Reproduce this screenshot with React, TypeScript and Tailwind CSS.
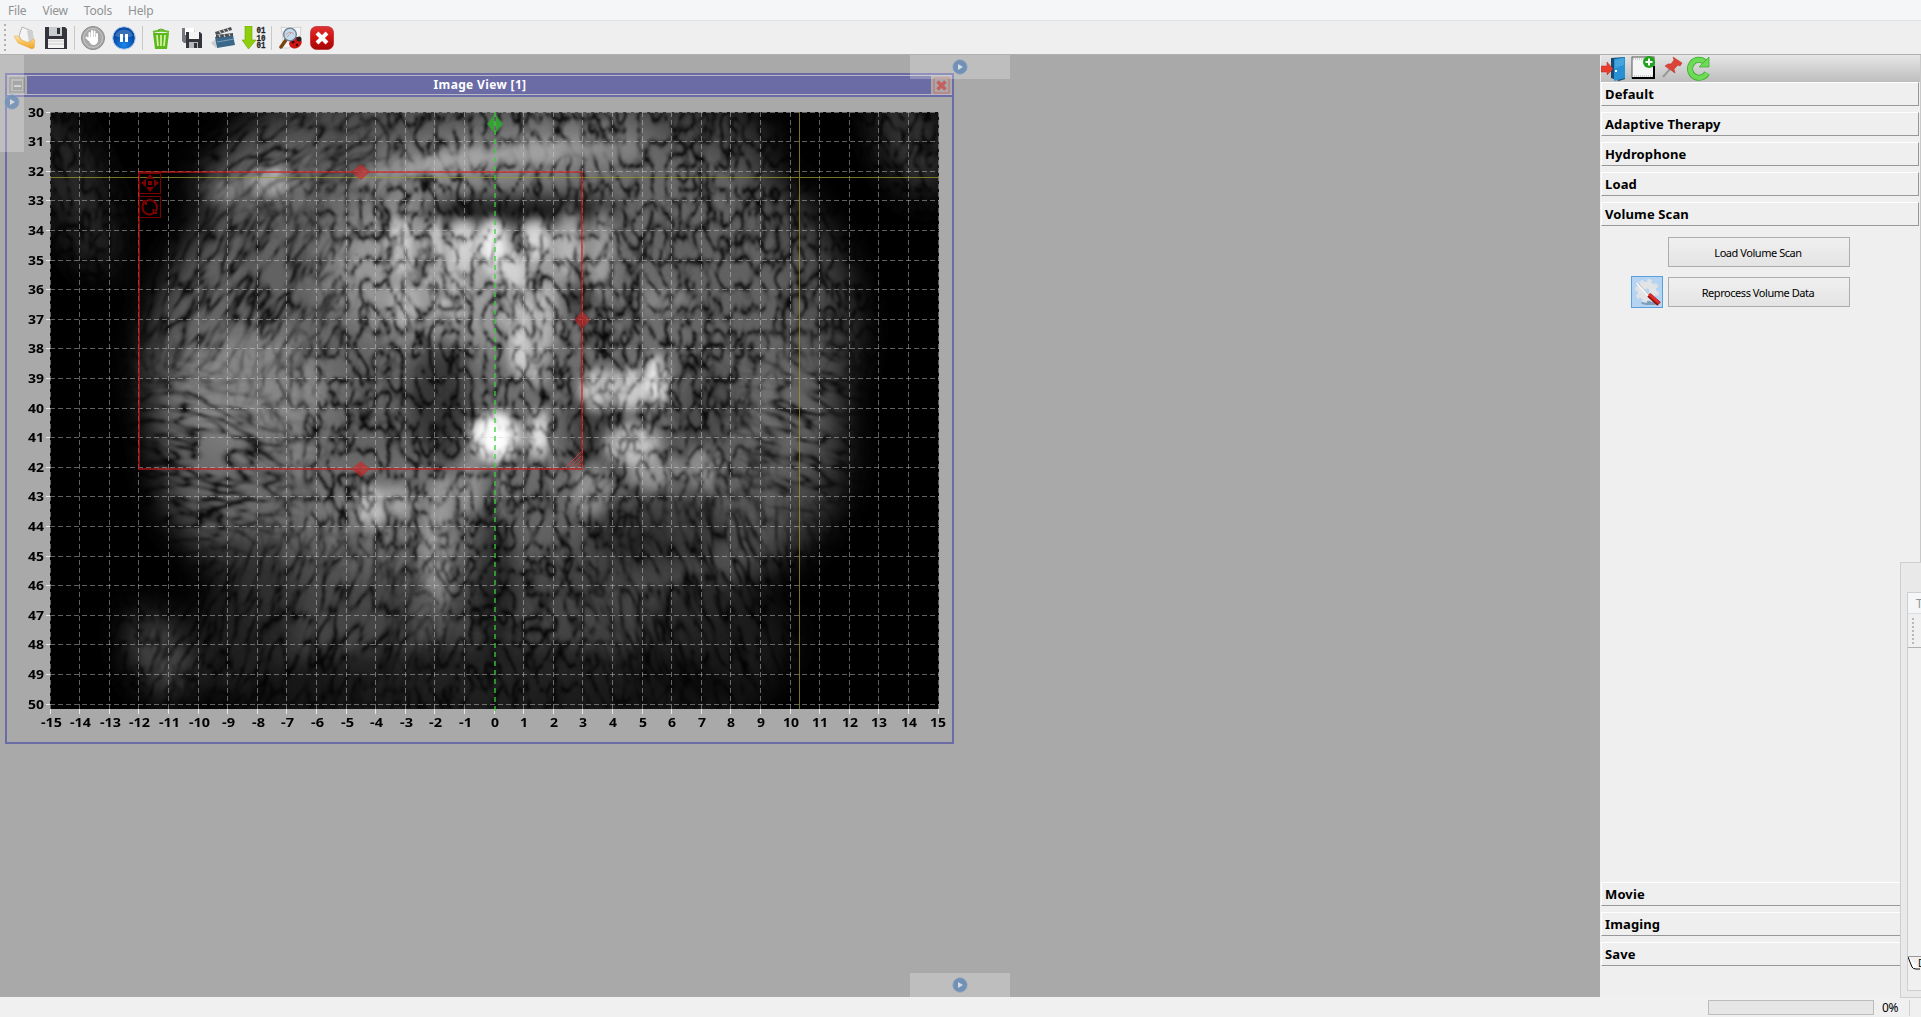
import React from 'react';

const UI = "font-['Noto_Sans',sans-serif]";
const STEP = 29.6;
const xAt = (u: number) => Math.floor(494 + u * STEP) + 0.5;
const yAt = (v: number) => Math.floor(112 + (v - 30) * STEP) + 0.5;
const COLS = Array.from({ length: 31 }, (_, i) => i - 15);
const ROWS = Array.from({ length: 21 }, (_, i) => i + 30);

// Echo patches: centre x, centre y, radius x, radius y, grey level, opacity, rotation
type Patch = [number, number, number, number, number, number, number];
const BROAD: Patch[] = [
  [485, 390, 335, 315, 85, 0.75, 0],
  [500, 150, 270, 90, 90, 0.65, 0],
  [490, 640, 300, 110, 75, 0.6, 0],
  [420, 370, 275, 210, 120, 0.62, 0],
  [650, 330, 205, 190, 118, 0.6, 0],
  [740, 450, 105, 120, 105, 0.6, 0],
  [255, 395, 75, 65, 150, 0.7, 0],
  [250, 480, 90, 70, 115, 0.5, 0],
  [460, 270, 135, 75, 175, 0.7, 0],
  [500, 155, 150, 22, 165, 0.75, -7],
  [410, 510, 110, 45, 135, 0.55, 0],
  [255, 175, 60, 26, 150, 0.6, -12],
  [160, 655, 24, 45, 100, 0.9, -25],
  [910, 140, 30, 60, 70, 0.8, -20],
  [75, 190, 30, 90, 55, 0.75, -20],
];
const SHADE: Patch[] = [
  [520, 210, 100, 15, 0, 0.8, 0],
  [440, 400, 30, 60, 10, 0.45, 0],
  [495, 575, 20, 80, 10, 0.5, 0],
  [590, 425, 22, 45, 20, 0.5, 0],
  [660, 530, 75, 35, 10, 0.3, 0],
  [490, 690, 250, 45, 0, 0.5, 0],
  [725, 640, 85, 60, 0, 0.4, 0],
  [240, 610, 60, 70, 0, 0.3, 0],
  [705, 410, 28, 50, 20, 0.35, 10],
  [580, 298, 16, 16, 0, 0.6, 0],
];
const GLOW: Patch[] = [
  [400, 245, 10, 28, 235, 0.75, 0],
  [435, 240, 9, 24, 225, 0.6, 0],
  [463, 245, 13, 26, 235, 0.65, 0],
  [493, 245, 12, 26, 255, 0.9, 0],
  [535, 240, 14, 20, 235, 0.75, 0],
  [508, 272, 18, 20, 225, 0.75, 0],
  [570, 240, 12, 35, 210, 0.5, 0],
  [450, 275, 28, 18, 200, 0.55, 0],
  [602, 250, 10, 45, 195, 0.45, 0],
  [405, 305, 14, 22, 200, 0.5, 0],
  [450, 308, 16, 14, 205, 0.5, 0],
  [520, 312, 18, 15, 205, 0.6, 0],
  [545, 320, 9, 35, 210, 0.55, 0],
  [520, 350, 10, 28, 235, 0.75, 0],
  [537, 362, 9, 24, 220, 0.6, 0],
  [598, 390, 18, 20, 225, 0.85, 0],
  [630, 388, 18, 20, 220, 0.85, 0],
  [657, 382, 10, 26, 250, 1, 0],
  [495, 437, 25, 24, 255, 1, 0],
  [495, 433, 14, 18, 255, 1, 0],
  [539, 435, 8, 24, 250, 1, 0],
  [632, 445, 26, 20, 215, 0.8, 0],
  [655, 472, 25, 16, 175, 0.6, 0],
  [703, 467, 18, 20, 165, 0.6, 0],
  [590, 490, 18, 26, 165, 0.55, 0],
  [370, 507, 13, 20, 220, 0.8, 0],
  [395, 502, 22, 14, 185, 0.65, 0],
  [440, 510, 12, 35, 170, 0.6, 8],
  [437, 565, 15, 45, 170, 0.6, -6],
  [470, 485, 10, 30, 165, 0.55, 0],
  [505, 490, 10, 28, 155, 0.45, 0],
  [270, 180, 20, 15, 200, 0.65, 0],
  [225, 190, 20, 12, 150, 0.5, 0],
  [430, 615, 18, 26, 115, 0.4, 0],
  [300, 458, 14, 20, 150, 0.4, 0],
  [260, 390, 60, 48, 140, 0.55, 0],
  [220, 370, 35, 30, 140, 0.4, 0],
  [665, 300, 26, 14, 150, 0.5, 0],
  [765, 405, 10, 35, 130, 0.4, 0],
];
// Smooth echo of the inserted needle
const NEEDLE: Patch[] = [
  [400, 171, 45, 10, 150, 0.75, -8],
  [460, 160, 55, 10, 170, 0.8, -7],
  [540, 152, 65, 10, 165, 0.85, -4],
  [600, 150, 45, 10, 135, 0.6, -3],
];

function Patches({ list, soft }: { list: Patch[]; soft: string }) {
  return (
    <g filter={`url(#${soft})`}>
      {list.map(([x, y, rx, ry, g, o, r], i) => (
        <ellipse key={i} cx={x} cy={y} rx={rx} ry={ry} fill={`rgb(${g},${g},${g})`} opacity={o} transform={`rotate(${r} ${x} ${y})`} />
      ))}
    </g>
  );
}

function Speckle({ id, fx, fy, seed }: { id: string; fx: number; fy: number; seed: number }) {
  const curve = '0.05 0.48 0.7 0.85 0.94 1';
  return (
    <filter id={id} x="0" y="0" width="1" height="1" colorInterpolationFilters="sRGB">
      <feTurbulence type="turbulence" baseFrequency={`${fx} ${fy}`} numOctaves={2} seed={seed} result="n" />
      <feColorMatrix values="2.8 0 0 0 -0.07  2.8 0 0 0 -0.07  2.8 0 0 0 -0.07  0 0 0 0 1" />
      <feComponentTransfer>
        <feFuncR type="table" tableValues={curve} />
        <feFuncG type="table" tableValues={curve} />
        <feFuncB type="table" tableValues={curve} />
      </feComponentTransfer>
      <feGaussianBlur stdDeviation="0.9" />
    </filter>
  );
}

// Areas whose speckle runs along a different direction: centre, radii, rotation of the grain
const GRAINS = [
  { id: 'ga', x: 190, y: 465, rx: 100, ry: 95, rot: 12, f: 'spH' },
  { id: 'gb', x: 225, y: 285, rx: 110, ry: 85, rot: 30, f: 'spV' },
  { id: 'gc', x: 240, y: 145, rx: 150, ry: 45, rot: 55, f: 'spV' },
  { id: 'gd', x: 810, y: 430, rx: 60, ry: 90, rot: 20, f: 'spH' },
  { id: 'ge', x: 290, y: 630, rx: 140, ry: 90, rot: 20, f: 'spV' },
  { id: 'gf', x: 720, y: 610, rx: 120, ry: 110, rot: -16, f: 'spV' },
];

function Ultrasound() {
  return (
    <svg className="block shrink-0" width="944" height="644" viewBox="7 97 944 644">
      <defs>
        <clipPath id="plot"><rect x="50" y="112" width="889" height="597" /></clipPath>
        <filter id="s26" x="-20%" y="-20%" width="140%" height="140%"><feGaussianBlur stdDeviation="17" /></filter>
        <filter id="s12" x="-20%" y="-20%" width="140%" height="140%"><feGaussianBlur stdDeviation="9" /></filter>
        <filter id="s5" x="-20%" y="-20%" width="140%" height="140%"><feGaussianBlur stdDeviation="5.500" /></filter>
        <filter id="s3" x="-20%" y="-60%" width="140%" height="220%"><feGaussianBlur stdDeviation="4" /></filter>
        <filter id="s18" x="-30%" y="-30%" width="160%" height="160%"><feGaussianBlur stdDeviation="20" /></filter>
        <Speckle id="sp" fx={0.072} fy={0.042} seed={7} />
        <Speckle id="spV" fx={0.075} fy={0.026} seed={21} />
        <Speckle id="spH" fx={0.026} fy={0.07} seed={12} />
        <mask id="mmain" maskUnits="userSpaceOnUse" x="0" y="90" width="960" height="660">
          <rect x="0" y="90" width="960" height="660" fill="#fff" />
          <g filter="url(#s18)">
            {GRAINS.map(g => <ellipse key={g.id} cx={g.x} cy={g.y} rx={g.rx} ry={g.ry} fill="#000" />)}
          </g>
        </mask>
        {GRAINS.map(g => (
          <mask key={g.id} id={g.id} maskUnits="userSpaceOnUse" x="0" y="90" width="960" height="660">
            <ellipse cx={g.x} cy={g.y} rx={g.rx} ry={g.ry} fill="#fff" filter="url(#s18)" />
          </mask>
        ))}
      </defs>
      <g clipPath="url(#plot)" style={{ isolation: 'isolate' }}>
        <rect x="50" y="112" width="889" height="597" fill="#000" />
        <Patches list={BROAD} soft="s26" />
        <Patches list={SHADE} soft="s12" />
        <g opacity="0.85"><Patches list={GLOW} soft="s5" /></g>
        <g mask="url(#mmain)" className="mix-blend-multiply">
          <rect x="50" y="112" width="889" height="597" filter="url(#sp)" />
        </g>
        {GRAINS.map(g => (
          <g key={g.id} mask={`url(#${g.id})`} className="mix-blend-multiply">
            <g transform={`rotate(${g.rot} ${g.x} ${g.y})`}>
              <rect x={g.x - 230} y={g.y - 230} width="460" height="460" filter={`url(#${g.f})`} />
            </g>
          </g>
        ))}
        <g opacity="0.5"><Patches list={GLOW} soft="s5" /></g>
        <Patches list={NEEDLE} soft="s3" />
        <ellipse cx="496" cy="437" rx="15" ry="18" fill="#fff" opacity=".8" filter="url(#s5)" />
      </g>
      <g stroke="#d2d2d2" strokeOpacity=".46" strokeDasharray="5 3" shapeRendering="crispEdges">
        {COLS.map(c => c !== 0 && <line key={c} x1={xAt(c)} x2={xAt(c)} y1="112" y2="709" />)}
        {ROWS.map(r => <line key={r} y1={yAt(r)} y2={yAt(r)} x1="50" x2="939" />)}
      </g>
      <g stroke="#e8e8e8" shapeRendering="crispEdges">
        {COLS.map(c => <line key={c} x1={xAt(c)} x2={xAt(c)} y1="709" y2="714" />)}
        {ROWS.map(r => <line key={r} y1={yAt(r)} y2={yAt(r)} x1="46" x2="50" />)}
      </g>
      <g shapeRendering="crispEdges" fill="none">
        <path d="M50 177.5H939M799.5 112V709" stroke="#99992b" strokeOpacity=".75" />
        <path d="M495 112V714" stroke="#37d337" strokeOpacity=".65" strokeWidth="2" strokeDasharray="5 4" />
        <path d="M139 172H582V469H139Z" stroke="#d01818" strokeOpacity=".6" strokeWidth="2" />
      </g>
      <g fill="#c82828" fillOpacity=".68">
        <path d="M352.500 171L361 164L369 171ZM352.500 173L361 180L369 173Z" />
        <path d="M352.500 468L361 461L369 468ZM352.500 470L361 477L369 470Z" />
        <path d="M581 312L574.500 320L581 328ZM583 312L590 320L583 328Z" />
      </g>
      <path d="M494 115L487 124L494 132ZM496 115L503 124L496 132Z" fill="#28b428" fillOpacity=".75" />
      <path d="M566 467L581 452M570 467L581 456M574 467L581 460M578 467L581 464" stroke="#cf3a3a" fill="none" />
      <g stroke="#7c0000" fill="none" shapeRendering="crispEdges">
        <rect x="139.500" y="173.500" width="21" height="20" />
        <rect x="139.500" y="196.500" width="21" height="21" />
      </g>
      <g fill="#7c0000">
        <path d="M150 174L154 179H146ZM150 192L146 187H154ZM141 183L146 179V187ZM159 183L154 187V179Z" />
        <rect x="148" y="181" width="4" height="4" />
      </g>
      <g fill="none" stroke="#7c0000" strokeWidth="2">
        <path d="M146 213.500A7.500 7.500 0 0 1 144.500 202M147.500 200.300A7.300 7.300 0 0 1 155.500 211.500M146 213.500Q150 215.500 153 213.500" />
        <path d="M142.500 201H146V205M157 213H153.500V209" />
      </g>
      <g fontFamily="'Noto Sans',sans-serif" fontWeight="700" fontSize="12.500" fill="#000">
        {ROWS.map(r => <text key={r} x="44" y={yAt(r) + 4.5} textAnchor="end" textLength="16" lengthAdjust="spacingAndGlyphs">{r}</text>)}
        {COLS.map(c => <text key={c} x={xAt(c) + (c === 15 ? -0.5 : c < 0 ? 1 : 0.5)} y="727" textAnchor="middle" textLength={(Math.abs(c) > 9 ? 16 : 8) + (c < 0 ? 5 : 0)} lengthAdjust="spacingAndGlyphs">{c}</text>)}
      </g>
    </svg>
  );
}

const Svg = ({ w = 24, h = 24, children, className = '' }: { w?: number; h?: number; children: React.ReactNode; className?: string }) => (
  <svg className={`block shrink-0 ${className}`} width={w} height={h} viewBox={`0 0 ${w} ${h}`}>{children}</svg>
);

const Sep = ({ className = '' }: { className?: string }) => <div className={`h-6 w-px shrink-0 bg-[#c8c8c8] ${className}`} />;

function Toolbar() {
  return (
    <div className="flex h-[34px] shrink-0 items-center border-b border-[#b0b0b0] bg-[#efefef]">
      <Svg w={3} h={27} className="ml-1">
        {[0, 1, 2, 3, 4, 5].map(i => <rect key={i} x="0" y={i * 5} width="2" height="2" fill="#b0b0b0" />)}
      </Svg>
      <Svg className="ml-[6px]">
        <defs><linearGradient id="fo" x2="0" y2="1"><stop stopColor="#ffe39a" /><stop offset="1" stopColor="#f0a020" /></linearGradient></defs>
        <path d="M6 10L9 1L19 5L21 21L10 17Z" fill="#f4f4f4" stroke="#b0b0b0" strokeWidth=".9" />
        <path d="M14 4L20 6L21 21L16 17Z" fill="#cfcfcf" />
        <path d="M1 10L5 10L7 13L14 16L17 16L20 13L22 14L21 22L19 23L5 17Z" fill="url(#fo)" stroke="#e0a33a" strokeWidth=".4" />
      </Svg>
      <Svg className="ml-[7px]" w={24}>
        <path d="M1 1H21L23 3V23H1Z" fill="#34343c" />
        <rect x="5" y="1" width="13" height="9" fill="#c9ccd0" /><rect x="13" y="2" width="3" height="6" fill="#333" />
        <rect x="4" y="13" width="16" height="9" fill="#f4f4f4" /><path d="M4 15H20M4 18H20" stroke="#ccc" />
      </Svg>
      <Sep className="ml-[6px]" />
      <Svg className="ml-[6px]">
        <circle cx="12" cy="12" r="11.500" fill="#a8a8a8" stroke="#898989" /><circle cx="12" cy="12" r="9.500" fill="none" stroke="#c7c7c7" />
        <path d="M8 14L5.500 11.500M8.500 13V7M11 12V5M13.500 12V5.500M16 13V8" stroke="#fff" strokeWidth="2" strokeLinecap="round" />
        <path d="M7.500 11H17V15Q16 19 12.500 19Q9.500 19 7.500 14Z" fill="#fff" />
      </Svg>
      <Svg className="ml-[7px]">
        <defs><radialGradient id="pb" cy=".8"><stop stopColor="#1c86ee" /><stop offset="1" stopColor="#064ba8" /></radialGradient></defs>
        <circle cx="12" cy="12" r="11.300" fill="url(#pb)" stroke="#bcd2ec" /><path d="M3 10A9.500 9.500 0 0 1 21 10Q12 13 3 10" fill="#fff" opacity=".2" />
        <rect x="8" y="8" width="3" height="8" fill="#fff" /><rect x="13" y="8" width="3" height="8" fill="#fff" />
      </Svg>
      <Sep className="ml-[6px]" />
      <Svg className="ml-[6px]">
        <path d="M4 7H20L18 23H6Z" fill="#5cb81e" /><path d="M8 9L9 20M12 9V20M16 9L15 20" stroke="#d6f4a4" strokeWidth="1.700" />
        <path d="M4 6Q12 3.500 20 6" stroke="#68bd28" strokeWidth="2" fill="none" /><path d="M9 4Q12 2 15 4" stroke="#58a020" fill="none" />
      </Svg>
      <Svg className="ml-2">
        <path d="M1 2H13L14 17H3L1 15Z" fill="#74777f" /><rect x="4" y="2" width="9" height="7" fill="#fff" />
        <path d="M5 6H19L21 8V22H5Z" fill="#33353b" /><rect x="8" y="6" width="10" height="7" fill="#f4f4f4" /><rect x="8" y="16" width="9" height="6" fill="#b5b7bc" /><rect x="13" y="17" width="3" height="5" fill="#333" />
      </Svg>
      <Svg className="ml-[6px]">
        <path d="M0 17L5 13V22Z" fill="#ccc" /><path d="M4 11L22 9L24 19L6 22Z" fill="#3b6788" />
        <path d="M4 6L20 1L21 4L5 9Z" fill="#4a4f54" /><path d="M5 9L22 7V10L5 12Z" fill="#4a4f54" />
        <path d="M8 5L10 7M12 3.500L14 6M16 2.500L18 5M8 9L9 11M13 8.500L14 11M18 8L19 10" stroke="#ccc" strokeWidth="1.200" /><path d="M6 16L23 13" stroke="#7ca2bb" />
      </Svg>
      <Svg w={25} className="ml-[7px]">
        <path d="M3 0H10V14H14L6.500 23L0 14H3Z" fill="#8fce0c" stroke="#68a800" strokeWidth=".6" />
        <g fontFamily="'Liberation Mono',monospace" fontWeight="700" fontSize="9" fill="#222" stroke="#222" strokeWidth=".3"><text x="14.500" y="7" textLength="9" lengthAdjust="spacingAndGlyphs">01</text><text x="14.500" y="14.500" textLength="9" lengthAdjust="spacingAndGlyphs">10</text><text x="14.500" y="22" textLength="9" lengthAdjust="spacingAndGlyphs">01</text></g>
      </Svg>
      <Sep className="ml-[4px]" />
      <Svg className="ml-[7px]">
        <path d="M2 1L9 2L22 1L21 12L10 22H3L4 12Z" fill="#f7f7f7" stroke="#c9c9c9" strokeWidth=".8" />
        <ellipse cx="16.500" cy="17" rx="6.500" ry="5.500" fill="#cf1616" transform="rotate(-30 16 17)" /><circle cx="20" cy="13" r="2.500" fill="#222" />
        <circle cx="14" cy="16" r="1.500" fill="#4a0000" /><circle cx="18" cy="19" r="1.300" fill="#4a0000" />
        <path d="M7 14L2 21" stroke="#79420f" strokeWidth="3.500" strokeLinecap="round" />
        <circle cx="11" cy="8.500" r="6.300" fill="#c2dcee" stroke="#6b7b8b" strokeWidth="1.300" /><path d="M7 9Q10 4 15 8M8 11L13 6" stroke="#c99" fill="none" />
      </Svg>
      <Svg className="ml-[7px]">
        <defs><linearGradient id="rx" x2="0" y2="1"><stop stopColor="#dd3434" /><stop offset=".5" stopColor="#d21010" /><stop offset="1" stopColor="#a30707" /></linearGradient></defs>
        <rect x=".5" y=".5" width="23" height="23" rx="6" fill="url(#rx)" stroke="#b22" strokeWidth=".7" /><path d="M7 7L17 17M17 7L7 17" stroke="#fff" strokeWidth="4" />
      </Svg>
    </div>
  );
}

const Play = () => (
  <Svg w={16} h={16}>
    <circle cx="8" cy="8" r="7.200" fill="#7090b5" stroke="#8fa6c0" strokeWidth=".8" /><path d="M6 5L11 8L6 11Z" fill="#d5dce3" />
  </Svg>
);

function Section({ label }: { label: string }) {
  return (
    <div className="h-6 w-[318px] shrink-0 border border-t-white border-l-white border-r-[#989898] border-b-[#989898] pl-[3px] text-[13px] leading-[23px] font-bold text-black">
      <span className="inline-block tracking-[0.12px]">{label}</span>
    </div>
  );
}

const PushButton = ({ label }: { label: string }) => (
  <div className="flex h-[30px] w-[182px] items-center justify-center border border-[#adadad] bg-linear-to-b from-[#f0f0f0] to-[#e4e4e4] pt-[2px] pr-[2px] text-[11px] font-normal text-black">
    <span className="tracking-[-0.45px]">{label}</span>
  </div>
);

function SidePanel() {
  return (
    <div className="flex w-[321px] shrink-0 flex-col border-r border-[#c8c8c8] bg-[#efefef] pl-px">
      <div className="flex h-[27px] shrink-0 items-start bg-linear-to-b from-[#e6e6e6] to-[#bdbdbd] pt-[1px]">
        <Svg w={25} h={25}>
          <path d="M10 2L24 1V23L18 25L10 22Z" fill="#174a72" /><path d="M13 3L24 1V22L13 25Z" fill="#2791d3" /><path d="M14 4L23 2V9L14 12Z" fill="#62b8e8" opacity=".5" /><rect x="14" y="14" width="2" height="2" fill="#fff" />
          <path d="M0 10H6V6L12 13L6 19V16H0Z" fill="#e93c2c" stroke="#b92c20" strokeWidth=".5" />
        </Svg>
        <Svg w={25} h={25} className="ml-[5px]">
          <rect x="1" y="1" width="22" height="21" fill="#f5f5f5" stroke="#555" /><path d="M1 22H23V10" stroke="#000" strokeWidth="2" fill="none" /><path d="M2 3H13M3 20H22" stroke="#aaa" strokeDasharray="1 1" />
          <circle cx="18" cy="6" r="6" fill="#22a31d" /><path d="M14.500 6H21.500M18 2.500V9.500" stroke="#fff" strokeWidth="2" />
        </Svg>
        <Svg w={22} h={24} className="ml-[5px]">
          <path d="M2 21L9 13" stroke="#999" strokeWidth="2" /><path d="M12 1L21 7L19 10L17 9L13 13L14 17L4 10L7 8L10 8L13 4Z" fill="#dc4438" stroke="#b8362c" strokeWidth=".6" />
        </Svg>
        <Svg w={25} h={25} className="ml-[3px]">
          <path d="M19 6A9 9 0 1 0 21 17" fill="none" stroke="#36a928" strokeWidth="6" /><path d="M19 6A9 9 0 1 0 21 17" fill="none" stroke="#6ddb55" strokeWidth="4.500" />
          <path d="M23 1V11H13Z" fill="#6ddb55" stroke="#36a928" strokeWidth=".7" />
        </Svg>
      </div>
      <div className="flex flex-col gap-[6px]">
        {['Default', 'Adaptive Therapy', 'Hydrophone', 'Load', 'Volume Scan'].map(s => <Section key={s} label={s} />)}
      </div>
      <div className="mt-[11px] ml-[67px]"><PushButton label="Load Volume Scan" /></div>
      <div className="mt-[9px] ml-[30px] flex items-center gap-[5px]">
        <div className="flex h-8 w-8 items-center justify-center border border-[#5a9fe0] bg-[#b4d4f2]">
          <Svg w={28} h={28}>
            <ellipse cx="17" cy="25" rx="9" ry="2" fill="#7f9db8" />
            <circle cx="14" cy="13" r="10.500" fill="none" stroke="#dfe2e4" strokeWidth="3" strokeDasharray="4.500 3.750" /><circle cx="14" cy="13" r="6" fill="none" stroke="#e2e4e6" strokeWidth="7" />
            <path d="M4 5L16 18" stroke="#fafafa" strokeWidth="2.500" /><path d="M5 5L16 17" stroke="#a5a5a5" strokeWidth=".8" />
            <path d="M16 17L26 26" stroke="#8f0f10" strokeWidth="5" /><path d="M16 16L26 25" stroke="#df2c2c" strokeWidth="3" />
          </Svg>
        </div>
        <PushButton label="Reprocess Volume Data" />
      </div>
      <div className="mt-auto mb-[31px] flex flex-col gap-[6px]">
        {['Movie', 'Imaging', 'Save'].map(s => <Section key={s} label={s} />)}
      </div>
    </div>
  );
}

export default function App() {
  return (
    <div className={`relative flex h-[1017px] w-[1921px] flex-col overflow-hidden bg-[#f0f0f0] ${UI}`}>
      <div className="flex h-[21px] shrink-0 gap-[16px] border-b border-[#dfe2e5] bg-[#f4f6f8] pl-2 text-[12px] leading-[21px] tracking-[-0.2px] text-[#929292]">
        <span>File</span><span>View</span><span>Tools</span><span>Help</span>
      </div>
      <Toolbar />
      <div className="flex h-[942px] shrink-0 bg-[#a9a9a9]">
        <div className="relative min-w-0 flex-1 pt-[18px] pl-[5px]">
          <div className="flex h-[671px] w-[949px] flex-col border-2 border-[#6b6ba5] bg-[#a9a9a9]">
            <div className="flex h-[20px] shrink-0 items-center border-y border-[#b8b8c4]">
              <div className="flex w-5 justify-center">
                <Svg w={16} h={16}><rect x="1" y="1" width="14" height="14" fill="none" stroke="#858585" strokeWidth="1.500" /><rect x="4" y="4" width="9" height="9" fill="#888" /><rect x="5" y="8" width="7" height="2" fill="#c4c4c4" /></Svg>
              </div>
              <div className="h-[18px] flex-1 bg-[#6b6ba5] text-center text-[12px] leading-[17px] font-bold tracking-[0.35px] text-white"><span className="ml-[2px]">Image View [1]</span></div>
              <div className="flex w-[21px] justify-center">
                <Svg w={17} h={17}><rect x="1" y="1" width="15" height="15" fill="none" stroke="#c66a6a" /><path d="M4.500 4.500L12.500 12.500M12.500 4.500L4.500 12.500" stroke="#c56060" strokeWidth="3.500" /></Svg>
              </div>
            </div>
            <div className="h-[2px] shrink-0 bg-[#6b6ba5]" />
            <Ultrasound />
          </div>
          <div className="absolute top-0 left-0 flex h-[97px] w-6 items-center justify-center bg-white/25"><div className="pb-[3px] opacity-85"><Play /></div></div>
          <div className="absolute top-0 left-[910px] flex h-6 w-[100px] items-center justify-center bg-white/25"><Play /></div>
          <div className="absolute bottom-0 left-[910px] flex h-6 w-[100px] items-center justify-center bg-white/25"><Play /></div>
        </div>
        <SidePanel />
      </div>
      <div className="flex h-5 shrink-0 items-start bg-[#f0f0f0] pt-[3px] pl-[1708px]">
        <div className="h-[15px] w-[166px] border border-[#bcbcbc] bg-[#e6e6e6]" />
        <span className="ml-2 w-[27px] text-[12px] leading-[15px] tracking-[-0.4px] text-black">0%</span>
        <div className="h-4 w-px bg-[#d0d0d0]" />
      </div>
      <div className="absolute top-[562px] left-[1900px] h-[436px] w-[21px] overflow-hidden border-t border-b border-l border-[#cfcfcf] bg-[#e9e9e9] pt-[29px] pl-[6px]">
        <div className="flex h-[399px] w-6 flex-col border border-[#cfcfcf] bg-[#f0f0f0]">
          <div className="h-[21px] shrink-0 border-b border-[#dcdfe2] bg-[#f4f6f8] pl-2 text-[12px] leading-[21px] text-[#929292]">T</div>
          <div className="h-[34px] shrink-0 border-b border-[#b0b0b0] pt-1 pl-1">
            <Svg w={3} h={28}>{[0, 1, 2, 3, 4, 5, 6].map(i => <rect key={i} y={i * 4} width="2" height="2" fill="#b8b8b8" />)}</Svg>
          </div>
          <div className="mt-auto mb-[20px] flex h-[14px] items-start border-t border-[#999]">
            <Svg w={12} h={14}><path d="M0 0L4 10Q5 12 8 12H12" fill="#fff" stroke="#000" /></Svg>
            <span className="-ml-[2px] text-[10px] leading-[12px] text-black">D</span>
          </div>
        </div>
      </div>
    </div>
  );
}
